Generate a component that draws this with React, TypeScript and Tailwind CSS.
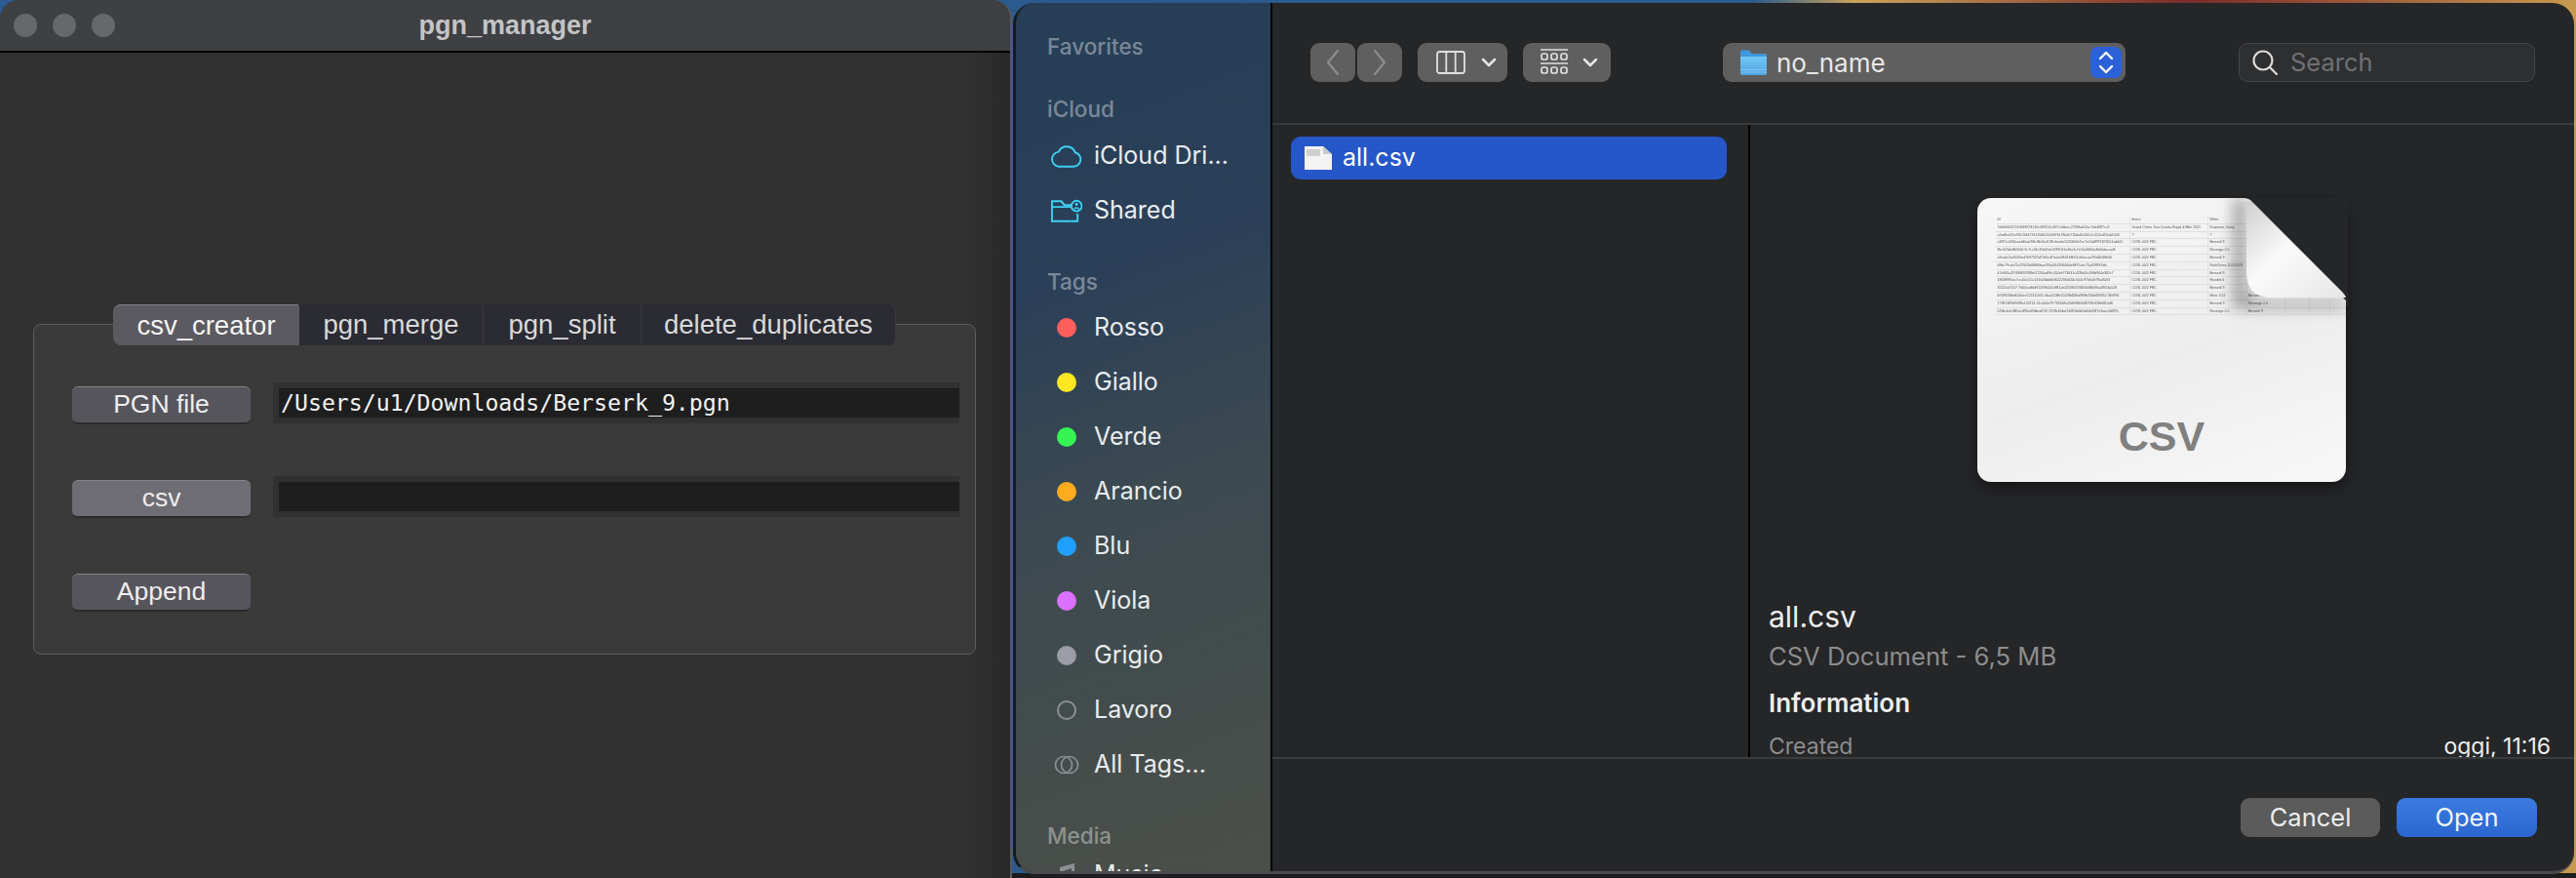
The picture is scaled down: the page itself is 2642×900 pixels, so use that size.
import React from "react";

const inter = "font-['Inter',sans-serif]";
const helv = "font-['Liberation_Sans',sans-serif]";

function PgnButton({ label, active }: { label: string; active?: boolean }) {
  return (
    <div
      className={`flex h-[39px] w-[183px] items-center justify-center rounded-[6px] border-t border-t-[#85838a] border-b-2 border-b-[#2a2a2c] text-[26.5px] text-[#eeeeee] ${active ? "bg-[#6f6d74]" : "bg-[#57555c]"}`}
    >
      {label}
    </div>
  );
}

function PgnRow({ label, active, value }: { label: string; active?: boolean; value: string }) {
  return (
    <div className="flex h-[96px] items-start pl-[39px]">
      <div className="mt-[4px]">
        <PgnButton label={label} active={active} />
      </div>
      <div className="ml-[23px] h-[42px] w-[704px] bg-[#313131] py-[6px] pl-[6px]">
        <div className="flex h-[30px] items-center bg-[#1e1e1e] pl-[2px] font-['DejaVu_Sans_Mono',monospace] text-[23.2px] text-[#f2f2f2]">
          {value}
        </div>
      </div>
    </div>
  );
}

function LeftWindow() {
  const tabs = [
    { t: "pgn_merge", w: "w-[189px]" },
    { t: "pgn_split", w: "w-[162px]" },
    { t: "delete_duplicates", w: "w-[261px] rounded-r-[8px]" },
  ];
  return (
    <div className={`h-full w-[1038px] shrink-0 overflow-hidden rounded-t-[20px] border-r-2 border-r-[#5a5a5a] bg-[linear-gradient(to_right,#313131_96%,#282828)] ${helv}`}>
      <div className="relative flex h-[54px] items-center border-b-2 border-b-black bg-[#3f4043] pl-[14px]">
        <div className="flex gap-[16px]">
          <div className="h-[24px] w-[24px] rounded-full bg-[#66686b]" />
          <div className="h-[24px] w-[24px] rounded-full bg-[#66686b]" />
          <div className="h-[24px] w-[24px] rounded-full bg-[#66686b]" />
        </div>
        <div className="absolute inset-x-0 top-[9px] text-center text-[27px] font-bold leading-[34px] text-[#c4c4c6]">pgn_manager</div>
      </div>
      <div className="ml-[34px] mt-[278px] h-[339px] w-[967px] rounded-[8px] border-[1.5px] border-[#5d5d5d] bg-[#3a3a3a]">
        <div className="-mt-[21px] ml-[81px] flex h-[42px] w-[803px] text-[27.5px]">
          <div className="flex w-[191px] items-center justify-center rounded-l-[8px] rounded-tr-[3px] border-t border-t-[#85838a] bg-[#5b5a60] text-[#f4f4f4]">csv_creator</div>
          {tabs.map((x) => (
            <div key={x.t} className={`flex items-center justify-center border-r border-r-[#38383d] bg-[#2b2b34] text-[#d9d9d9] ${x.w}`}>
              {x.t}
            </div>
          ))}
        </div>
        <div className="mt-[38px]">
          <PgnRow label="PGN file" value="/Users/u1/Downloads/Berserk_9.pgn" />
          <PgnRow label="csv" active value="" />
          <div className="mt-[4px] pl-[39px]">
            <PgnButton label="Append" />
          </div>
        </div>
      </div>
    </div>
  );
}

function SideHead({ children, className }: { children: React.ReactNode; className: string }) {
  return <div className={`h-[30px] pl-[32px] text-[22.5px] font-medium leading-[30px] text-[#ffffff66] ${className}`}>{children}</div>;
}

function SideRow({ icon, label }: { icon: React.ReactNode; label: string }) {
  return (
    <div className="flex h-[56px] items-center">
      <div className="flex w-[80px] justify-center pl-[33px] pr-[10px]">{icon}</div>
      <span className="text-[25px] text-[#e9ecee]">{label}</span>
    </div>
  );
}

const dot = (c: string) => <div className={`h-[20px] w-[20px] rounded-full ${c}`} />;

function Sidebar() {
  const tags = [
    { l: "Rosso", c: "bg-[#ff5f5c]" },
    { l: "Giallo", c: "bg-[#ffe81f]" },
    { l: "Verde", c: "bg-[#35f553]" },
    { l: "Arancio", c: "bg-[#ffab1f]" },
    { l: "Blu", c: "bg-[#1f9fff]" },
    { l: "Viola", c: "bg-[#db70ff]" },
    { l: "Grigio", c: "bg-[#9a9ca6]" },
  ];
  return (
    <div className={`h-full w-[263px] shrink-0 overflow-hidden border-r-2 border-r-black bg-[linear-gradient(160deg,#263e57_0%,#2b4058_32%,#3d4a50_58%,#4b4f48_100%)] pt-[30px] ${inter}`}>
      <SideHead className="">Favorites</SideHead>
      <SideHead className="mt-[34px]">iCloud</SideHead>
      <div className="mt-[5px]">
        <SideRow
          label="iCloud Dri..."
          icon={
            <svg width="33" height="24" viewBox="0 0 34 24" fill="none" stroke="#3fd0f2" strokeWidth="2">
              <path d="M9 23h16a7.5 7.5 0 0 0 1.5-14.8A9.5 9.5 0 0 0 9 7.5 7.8 7.8 0 0 0 9 23z" />
            </svg>
          }
        />
        <SideRow
          label="Shared"
          icon={
            <svg width="33" height="24" viewBox="0 0 34 24" fill="none" stroke="#3fd0f2" strokeWidth="2">
              <path d="M22 23H2V2h10l3 4h7" />
              <path d="M2 8h20" />
              <path d="M29 15v8h-7" />
              <circle cx="28" cy="7" r="5.5" />
              <circle cx="28" cy="5" r="1.6" fill="#3fd0f2" stroke="none" />
              <path d="M25.5 10.5c.5-2 4.500-2 5 0" strokeWidth="1.500" />
            </svg>
          }
        />
      </div>
      <SideHead className="mt-[30px]">Tags</SideHead>
      <div className="mt-[4px]">
        {tags.map((t) => (
          <SideRow key={t.l} label={t.l} icon={dot(t.c)} />
        ))}
        <SideRow label="Lavoro" icon={<div className="h-[20px] w-[20px] rounded-full border-2 border-[#8b9094]" />} />
        <SideRow
          label="All Tags..."
          icon={
            <svg width="26" height="20" viewBox="0 0 26 20" fill="none" stroke="#8b9094" strokeWidth="1.700">
              <circle cx="10" cy="10" r="8.500" />
              <circle cx="16" cy="10" r="8.500" />
            </svg>
          }
        />
      </div>
      <SideHead className="mt-[30px]">Media</SideHead>
      <div className="-mt-[3px]">
        <SideRow
          label="Music"
          icon={
            <svg width="20" height="24" viewBox="0 0 20 24" fill="#8b9094">
              <path d="M3 4 18 0v18h-3V5L6 8v14H3z" />
            </svg>
          }
        />
      </div>
    </div>
  );
}

function Chevron({ dir }: { dir: "l" | "r" }) {
  return (
    <svg width="14" height="28" viewBox="0 0 14 28" fill="none" stroke="#8c8c8c" strokeWidth="2.200" strokeLinecap="round" strokeLinejoin="round">
      <path d={dir === "l" ? "M12 2 2 14l10 12" : "M2 2l10 12L2 26"} />
    </svg>
  );
}

function Caret() {
  return (
    <svg width="16" height="10" viewBox="0 0 16 10" fill="none" stroke="#e6e6e6" strokeWidth="2.500" strokeLinecap="round" strokeLinejoin="round">
      <path d="M2 2l6 6 6-6" />
    </svg>
  );
}

function FolderIcon({ w, h }: { w: number; h: number }) {
  return (
    <svg width={w} height={h} viewBox="0 0 28 26">
      <defs>
        <linearGradient id="fold1" x1="0" y1="0" x2="0" y2="1">
          <stop offset="0" stopColor="#72c6f5" />
          <stop offset="1" stopColor="#4fa4e2" />
        </linearGradient>
      </defs>
      <path d="M1 2q0-1.500 1.500-1.500h7L13 4h13.500Q28 4 28 5.500V24q0 2-2 2H3q-2 0-2-2z" fill="#3f97dc" />
      <path d="M1 7h27v17q0 2-2 2H3q-2 0-2-2z" fill="url(#fold1)" />
      <path d="M1 20.500h27M1 23h27" stroke="#8fd0f5" strokeWidth="0.700" />
    </svg>
  );
}

function Toolbar() {
  const pill = "h-[40px] rounded-[9px] bg-[#5f5f5f] flex items-center";
  return (
    <div className={`flex h-[125px] items-start border-b-2 border-b-[#3a3b3c] pt-[41px] ${inter}`}>
      <div className="ml-[39px] flex gap-[2px]">
        <div className={`${pill} w-[46px] justify-center`}>
          <Chevron dir="l" />
        </div>
        <div className={`${pill} w-[46px] justify-center`}>
          <Chevron dir="r" />
        </div>
      </div>
      <div className={`${pill} ml-[16px] w-[92px] gap-[16px] pl-[19px]`}>
        <svg width="30" height="24" viewBox="0 0 30 24" fill="none" stroke="#e0e0e0" strokeWidth="1.800">
          <rect x="1" y="1" width="28" height="22" rx="2.500" />
          <path d="M10.300 1v22M19.700 1v22" />
        </svg>
        <Caret />
      </div>
      <div className={`${pill} ml-[16px] w-[90px] gap-[15px] pl-[18px]`}>
        <svg width="28" height="28" viewBox="0 0 28 28" fill="none" stroke="#e0e0e0" strokeWidth="1.700">
          <path d="M0 1h28M0 15h28" />
          <rect x="1" y="5" width="6" height="6" rx="2" />
          <rect x="11" y="5" width="6" height="6" rx="2" />
          <rect x="21" y="5" width="6" height="6" rx="2" />
          <rect x="1" y="19" width="6" height="6" rx="2" />
          <rect x="11" y="19" width="6" height="6" rx="2" />
          <rect x="21" y="19" width="6" height="6" rx="2" />
        </svg>
        <Caret />
      </div>
      <div className={`${pill} ml-[115px] w-[413px] pl-[17px] text-[26px] text-[#e8e8e8]`}>
        <FolderIcon w={28} h={26} />
        <span className="ml-[10px] flex-1">no_name</span>
        <div className="mr-[4px] flex h-[32px] w-[32px] items-center justify-center rounded-[7px] bg-[#2b61d8]">
          <svg width="18" height="26" viewBox="0 0 18 26" fill="none" stroke="#ffffff" strokeWidth="2.400" strokeLinecap="round" strokeLinejoin="round">
            <path d="M3 9l6-6 6 6M3 17l6 6 6-6" />
          </svg>
        </div>
      </div>
      <div className="ml-[116px] flex h-[40px] w-[304px] items-center rounded-[9px] border border-[#45464a] bg-[#2e2f31] pl-[13px] text-[25.5px] text-[#707174]">
        <svg width="26" height="26" viewBox="0 0 26 26" fill="none" stroke="#dcdcdc" strokeWidth="2.200" strokeLinecap="round">
          <circle cx="11" cy="11" r="9.500" />
          <path d="M18 18l7 7" />
        </svg>
        <span className="ml-[13px]">Search</span>
      </div>
    </div>
  );
}

const tableRows = [
  ["ID", "Event", "White", "", "", ""],
  ["7db4066372416f68734116c0ff7414c067c4dbacc2196fab52ac7eb4687cc9", "Grand Chess Tour Croatia Rapid & Blitz 2021", "Kasparov, Garry", "", "", ""],
  ["a2ed8e041e95120b17331256b20040f7b1950d0720da8a582c1c324a455ab1440", "?", "?", "", "", ""],
  ["a3821c0f33eaeb4bab7f8c8b16af139c4eede1525663e7ec7a10d8971870551edd41", "CCRL 40/2 FRC", "Berserk 9", "", "", ""],
  ["8bc523de8b3040 6c7cc54c35d41dc6287041e30e4c7e50a3660a3b60dacaaf3", "CCRL 40/2 FRC", "Revenge 2.0", "", "", ""],
  ["a9cadc3cd5055e47b97325d72d0c4f7a4a5fb31b8051cb5acaa790d454ffb30", "CCRL 40/2 FRC", "Berserk 9", "", "", ""],
  ["d9bc79cda72a29105b68f66bacf26fa2643584f04e8ff75cbc75a928937dfc", "CCRL 40/2 FRC", "RubiChess 20220223", "", "", ""],
  ["47a940a2f74f6f692f93b6172f4ad96c052ab773631c428b42e396d904e382c7", "CCRL 40/2 FRC", "Berserk 9", "", "", ""],
  ["18638f9f1ac7cc40e151c1316d3dd4b3622236d054c504c97b6a9c95af50f3", "CCRL 40/2 FRC", "Houdini 6", "", "", ""],
  ["35522af7157 7fd03ca86d91359b041d941ab22f2ff037085f4488d90a48f53a528", "CCRL 40/2 FRC", "Berserk 9", "", "", ""],
  ["6f749036bd62b4ce521311055 4faa6128b1142f8d18bd909b234d490952 38d994", "CCRL 40/2 FRC", "Minic 3.22", "Berserk 9", "", ""],
  ["17381385b9498e102214 31c444e78 7633d8c03d098600827f8c62fb6810d8", "CCRL 40/2 FRC", "Berserk 9", "Revenge 2.0", "", ""],
  ["523bcb4cf845e0496a09dbed733 7209b12daf13481b4b10d04d587e3eac3d097c", "CCRL 40/2 FRC", "Revenge 2.0", "Berserk 9", "", ""],
];

function CsvTable() {
  const widths = ["w-[138px]", "w-[80px]", "w-[39.500px]", "w-[39.500px]", "w-[25px]", "w-[21px]"];
  return (
    <div className="ml-[19px] pt-[19px] font-['Liberation_Sans',sans-serif] text-[3.500px] leading-[7.800px] text-[#555555] blur-[0.400px]">
      {tableRows.map((r, i) => (
        <div key={i} className="flex h-[7.800px] border-b-[0.500px] border-b-[#e0e0e0]">
          {r.map((c, j) => (
            <div key={j} className={`${widths[j]} whitespace-nowrap border-r-[0.500px] border-r-[#e0e0e0] pl-[1.500px]`}>
              {c}
            </div>
          ))}
        </div>
      ))}
    </div>
  );
}

function FileIcon() {
  return (
    <div className="relative ml-[233px] mt-[75px] h-[291px] w-[378px] rounded-[14px] bg-[linear-gradient(160deg,#f7f7f7_0%,#ededed_55%,#f8f8f8_100%)] shadow-[0_6px_16px_rgba(0,0,0,0.45)]">
      <CsvTable />
      <div className="absolute inset-x-0 top-[220px] text-center font-['Liberation_Sans',sans-serif] text-[43px] font-bold leading-[48px] text-[#808080]">CSV</div>
      <svg className="absolute left-0 top-0" width="380" height="130" viewBox="0 0 380 130" fill="none">
        <defs>
          <filter id="blr" x="-30%" y="-30%" width="160%" height="160%">
            <feGaussianBlur stdDeviation="7" />
          </filter>
          <linearGradient id="pg" x1="0" y1="0" x2="1" y2="1">
            <stop offset="0" stopColor="#cfcfcf" />
            <stop offset="0.45" stopColor="#fafafa" />
            <stop offset="1" stopColor="#e6e6e6" />
          </linearGradient>
        </defs>
        <path d="M262 0h14v88q0 18 18 18h84v8H262z" fill="#000000" opacity="0.3" filter="url(#blr)" />
        <path d="M264-1h116v112h-2v-6L280 2Q276-1 264 0z" fill="#252628" />
        <path d="M276 3q5 0 9 4l88 88q5 5 5 7H302q-26 0-26-26z" fill="url(#pg)" />
      </svg>
    </div>
  );
}

function MiniFile() {
  return (
    <svg width="28" height="24" viewBox="0 0 28 24">
      <path d="M0 0h19l9 8v16H0z" fill="#f3f3f3" />
      <path d="M19 0l9 8h-9z" fill="#c9c9c9" />
      <rect x="2" y="3" width="14" height="7" fill="#cfcfcf" />
    </svg>
  );
}

function Dialog() {
  return (
    <div className="flex h-[893px] w-[1601px] overflow-hidden rounded-[22px] border-b-[3px] border-l-[3px] border-b-[#4a4a4c] border-l-[#1a1a1a] bg-[#252628]">
      <Sidebar />
      <div className="flex min-w-0 flex-1 flex-col">
        <Toolbar />
        <div className={`flex h-[650px] border-b-2 border-b-[#3a3b3c] ${inter}`}>
          <div className="w-[490px] shrink-0 border-r-2 border-r-black pl-[19px] pt-[12px]">
            <div className="flex h-[44px] w-[447px] items-center rounded-[10px] bg-[#2557c8] pl-[14px]">
              <MiniFile />
              <span className="ml-[11px] text-[25px] text-white">all.csv</span>
            </div>
          </div>
          <div className="min-w-0 flex-1 overflow-hidden">
            <FileIcon />
            <div className="pl-[19px]">
              <div className="mt-[120px] text-[30px] leading-[36px] text-[#eeeeee]">all.csv</div>
              <div className="mt-[7px] text-[25.6px] leading-[32px] text-[#8d8d8d]">CSV Document - 6,5 MB</div>
              <div className="mt-[16px] text-[26px] font-semibold leading-[32px] text-[#eeeeee]">Information</div>
              <div className="mt-[13px] flex pr-[24px] text-[23px] leading-[30px]">
                <span className="flex-1 text-[#8d8d8d]">Created</span>
                <span className="text-[#eeeeee]">oggi, 11:16</span>
              </div>
            </div>
          </div>
        </div>
        <div className={`flex justify-end gap-[17px] pr-[38px] pt-[40px] text-[25.5px] ${inter}`}>
          <div className="flex h-[40px] w-[143px] items-center justify-center rounded-[9px] bg-[#5b5b5b] text-[#ededed]">Cancel</div>
          <div className="flex h-[40px] w-[144px] items-center justify-center rounded-[9px] bg-[linear-gradient(to_bottom,#3a7be0,#2b66cf)] text-[#f4f6fb]">Open</div>
        </div>
      </div>
    </div>
  );
}

export default function App() {
  return (
    <div className="h-[900px] w-[2642px] overflow-hidden bg-[linear-gradient(to_bottom,transparent_99.4%,#1c1b1d_99.4%),linear-gradient(to_right,#2a5a8e_0%,#2a5a8e_68%,#caa45a_72%,#7a2a2a_85%,#c89a50_100%)]">
      <div className="flex h-[900px] items-start">
        <LeftWindow />
        <div className="ml-[1px] pt-[3px]">
          <Dialog />
        </div>
      </div>
    </div>
  );
}
